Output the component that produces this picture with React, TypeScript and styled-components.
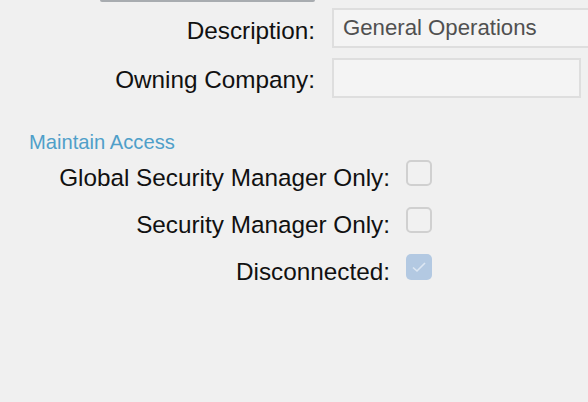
import React from "react";
import styled, { createGlobalStyle } from "styled-components";

const GlobalStyle = createGlobalStyle`
  html, body {
    margin: 0;
    padding: 0;
    background: #f0f0f0;
    overflow: hidden;
  }
  body {
    font-family: "Liberation Sans", Arial, sans-serif;
  }
`

const Page = styled.div`
  width: 588px;
  height: 402px;
  overflow: hidden;
  background: #f0f0f0;
`

const ButtonEdge = styled.div`
  margin-left: 100px;
  width: 215px;
  height: 2px;
  background: #a8acb0;
  border-radius: 0 0 2px 2px;
`

const FormGrid = styled.div`
  display: grid;
  grid-template-columns: 315px 1fr;
  column-gap: 17px;
  row-gap: 10px;
  margin-top: 6px;
  align-items: start;
`

const Label = styled.label<{ $offset?: number }>`
  font-size: 24.3px;
  line-height: 28px;
  color: #111;
  text-align: right;
  white-space: nowrap;
  margin-top: ${(p) => p.$offset ?? 9}px;
`

const TextBox = styled.div<{ $width: number }>`
  box-sizing: border-box;
  width: ${(p) => p.$width}px;
  height: 40px;
  border: 2px solid #dedede;
  background: #f4f4f4;
  padding: 0 9px;
  font-size: 22.2px;
  line-height: 36px;
  color: #505050;
  white-space: nowrap;
`

const Section = styled.div`
  margin-top: 32px;
`

const SectionTitle = styled.div`
  margin-left: 29px;
  font-size: 20.2px;
  line-height: 24px;
  color: #4f9fc9;
`

const CheckGrid = styled.div`
  display: grid;
  grid-template-columns: 390px 26px;
  column-gap: 16px;
  row-gap: 15px;
  margin-top: 6px;
  align-items: start;
`

const Box = styled.div<{ $checked?: boolean }>`
  box-sizing: border-box;
  width: 26px;
  height: 26px;
  border-radius: 5px;
  border: ${(p) => (p.$checked ? "none" : "2px solid #d0d0d0")};
  background: ${(p) => (p.$checked ? "#b3c9e2" : "#f1f1f1")};
  display: flex;
  align-items: center;
  justify-content: center;
`

function CheckBox({ checked }: { checked?: boolean }) {
  return (
    <Box $checked={checked}>
      {checked && (
        <svg width="16" height="14" viewBox="0 0 16 14">
          <polyline points="2,7.5 6,11 14,3" fill="none" stroke="#dde7f3" strokeWidth="1.6" />
        </svg>
      )}
    </Box>
  )
}

const checks = [
  { label: "Global Security Manager Only:", checked: false },
  { label: "Security Manager Only:", checked: false },
  { label: "Disconnected:", checked: true },
]

export default function App(): JSX.Element {
  return (
    <Page>
      <GlobalStyle />
      <ButtonEdge />
      <FormGrid>
        <Label>Description:</Label>
        <TextBox $width={290}>General Operations</TextBox>
        <Label $offset={8}>Owning Company:</Label>
        <TextBox $width={249} />
      </FormGrid>
      <Section>
        <SectionTitle>Maintain Access</SectionTitle>
        <CheckGrid>
          {checks.map((c) => (
            <React.Fragment key={c.label}>
              <Label $offset={4}>{c.label}</Label>
              <CheckBox checked={c.checked} />
            </React.Fragment>
          ))}
        </CheckGrid>
      </Section>
    </Page>
  )
}
